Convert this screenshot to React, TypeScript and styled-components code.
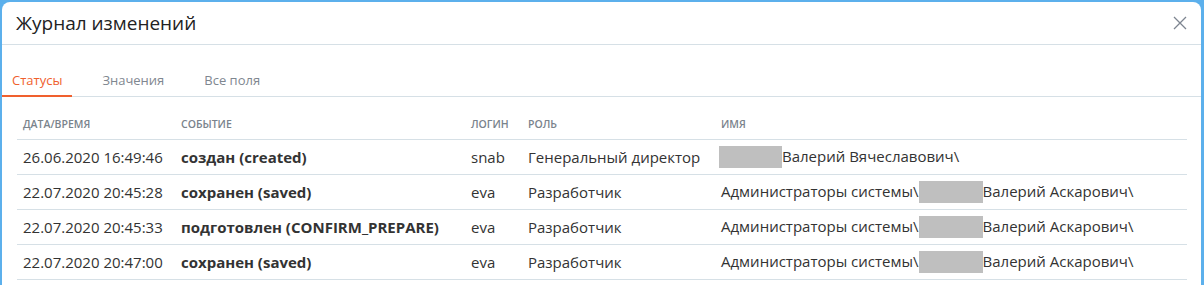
import styled, { createGlobalStyle } from "styled-components";

const GlobalStyle = createGlobalStyle`
  html, body {
    margin: 0;
    padding: 0;
    background: #5cb0ec;
    font-family: "Open Sans", "Noto Sans", sans-serif;
    overflow: hidden;
  }
`;

type Row = {
  date: string;
  event: string;
  login: string;
  role: string;
  prefix: string;
  name: string;
};

const rows: Row[] = [
  {
    date: "26.06.2020 16:49:46",
    event: "создан (created)",
    login: "snab",
    role: "Генеральный директор",
    prefix: "",
    name: "Валерий Вячеславович\\",
  },
  {
    date: "22.07.2020 20:45:28",
    event: "сохранен (saved)",
    login: "eva",
    role: "Разработчик",
    prefix: "Администраторы системы\\",
    name: "Валерий Аскарович\\",
  },
  {
    date: "22.07.2020 20:45:33",
    event: "подготовлен (CONFIRM_PREPARE)",
    login: "eva",
    role: "Разработчик",
    prefix: "Администраторы системы\\",
    name: "Валерий Аскарович\\",
  },
  {
    date: "22.07.2020 20:47:00",
    event: "сохранен (saved)",
    login: "eva",
    role: "Разработчик",
    prefix: "Администраторы системы\\",
    name: "Валерий Аскарович\\",
  },
];

const tabs = ["Статусы", "Значения", "Все поля"];

const columns = [
  { title: "Дата/время", width: 158 },
  { title: "Событие", width: 290 },
  { title: "Логин", width: 57 },
  { title: "Роль", width: 193 },
  { title: "Имя", width: 472 },
];

const App = () => {
  return (
    <>
      <GlobalStyle />
      <Modal>
        <Header>
          <Title>Журнал изменений</Title>
          <Close aria-label="close">
            <svg width="14" height="14" viewBox="0 0 14 14">
              <path d="M1 1L13 13M13 1L1 13" stroke="#7d8590" strokeWidth="1.3" />
            </svg>
          </Close>
        </Header>
        <Tabs>
          {tabs.map((tab, index) => (
            <Tab key={tab} $active={index === 0}>
              {tab}
            </Tab>
          ))}
        </Tabs>
        <Body>
          <Table>
            <colgroup>
              {columns.map((col) => (
                <Col key={col.title} $width={col.width} />
              ))}
            </colgroup>
            <thead>
              <tr>
                {columns.map((col) => (
                  <Th key={col.title}>{col.title}</Th>
                ))}
              </tr>
            </thead>
            <tbody>
              {rows.map((row, index) => (
                <tr key={index}>
                  <Td>{row.date}</Td>
                  <Td $bold>{row.event}</Td>
                  <Td>{row.login}</Td>
                  <Td>{row.role}</Td>
                  <Td>
                    {row.prefix}
                    <Redacted $first={!row.prefix} />
                    {row.name}
                  </Td>
                </tr>
              ))}
            </tbody>
          </Table>
        </Body>
      </Modal>
    </>
  );
};
export default App;

const Modal = styled.div`
  margin: 2px 0 0 2px;
  width: 1199px;
  height: 300px;
  background: #fff;
  border-radius: 8px 8px 0 0;
  color: #333;
`;
const Header = styled.div`
  display: flex;
  align-items: center;
  justify-content: space-between;
  height: 42px;
  padding: 0 14px 0 14px;
  border-bottom: 1px solid #d6e0e6;
`;
const Title = styled.h2`
  margin: 0;
  font-size: 19px;
  font-weight: 400;
  color: #222;
`;
const Close = styled.button`
  display: flex;
  border: 0;
  background: none;
  padding: 0;
  cursor: pointer;
`;
const Tabs = styled.div`
  display: flex;
  margin-top: 20px;
  border-bottom: 1px solid #d6e0e6;
`;
const Tab = styled.div<{ $active?: boolean }>`
  padding: 6px 10px 6px;
  margin-right: 20px;
  margin-bottom: -1px;
  font-size: 13px;
  color: ${(p) => (p.$active ? "#f0602e" : "#7f8790")};
  border-bottom: 2px solid ${(p) => (p.$active ? "#f0602e" : "transparent")};
  cursor: pointer;
`;
const Body = styled.div`
  padding: 8px 15px 0 15px;
`;
const Table = styled.table`
  width: 1170px;
  border-collapse: collapse;
  table-layout: fixed;
`;
const Col = styled.col<{ $width: number }>`
  width: ${(p) => p.$width}px;
`;
const Th = styled.th`
  text-align: left;
  padding: 12px 6px 8px;
  font-size: 10.5px;
  font-weight: 600;
  text-transform: uppercase;
  color: #7a838c;
  border-bottom: 1px solid #d6e0e6;
  white-space: nowrap;
`;
const Td = styled.td<{ $bold?: boolean }>`
  padding: 0 6px;
  height: 34px;
  font-size: 15px;
  font-weight: ${(p) => (p.$bold ? 700 : 400)};
  color: #333;
  border-bottom: 1px solid #d6e0e6;
  white-space: nowrap;
`;
const Redacted = styled.span<{ $first?: boolean }>`
  display: inline-block;
  width: ${(p) => (p.$first ? 63 : 64)}px;
  height: 22px;
  margin-left: ${(p) => (p.$first ? -2 : 0)}px;
  vertical-align: middle;
  background: #bfbfbf;
`;
